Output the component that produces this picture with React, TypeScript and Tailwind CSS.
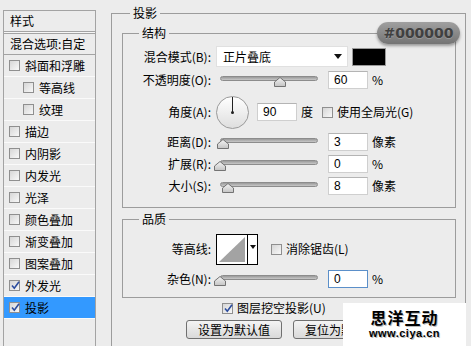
import React from 'react';

const leftItems = [
  { label: '斜面和浮雕', indent: false, checked: false },
  { label: '等高线', indent: true, checked: false },
  { label: '纹理', indent: true, checked: false },
  { label: '描边', indent: false, checked: false },
  { label: '内阴影', indent: false, checked: false },
  { label: '内发光', indent: false, checked: false },
  { label: '光泽', indent: false, checked: false },
  { label: '颜色叠加', indent: false, checked: false },
  { label: '渐变叠加', indent: false, checked: false },
  { label: '图案叠加', indent: false, checked: false },
  { label: '外发光', indent: false, checked: true },
  { label: '投影', indent: false, checked: true, active: true },
];

function Check({ checked }: { checked?: boolean }) {
  return (
    <span className="relative w-[11px] h-[11px] shrink-0 border border-[#8f8f8f] bg-gradient-to-br from-[#d6d6d6] to-[#f8f8f8]">
      {checked && (
        <svg className="absolute left-[0px] top-[-1px]" width="11" height="11" viewBox="0 0 11 11">
          <path d="M2 5.5 L4.3 8.2 L9 1.8" fill="none" stroke="#2b4c9e" strokeWidth="1.6" />
        </svg>
      )}
    </span>
  );
}

function Slider({ pos }: { pos: number }) {
  return (
    <div className="relative w-[98px] h-[14px] ml-[9px] shrink-0">
      <div className="mt-[3px] h-[5px] rounded-full border border-[#8c8c8c] bg-gradient-to-b from-[#9a9a9a] to-[#c8c8c8]" />
      <svg className="absolute top-[4px]" style={{ left: pos - 6 }} width="12" height="10" viewBox="0 0 12 10">
        <defs>
          <linearGradient id="th" x1="0" y1="0" x2="0" y2="1">
            <stop offset="0" stopColor="#f4f4f4" />
            <stop offset="1" stopColor="#c4c4c4" />
          </linearGradient>
        </defs>
        <path d="M6 0.5 L11.5 5 L11.5 9.5 L0.5 9.5 L0.5 5 Z" fill="url(#th)" stroke="#737373" />
      </svg>
    </div>
  );
}

function NumBox({ value, focus }: { value: string; focus?: boolean }) {
  return (
    <div
      className={`w-[40px] h-[18px] shrink-0 bg-white border pl-[5px] flex items-center font-['Liberation_Sans',sans-serif] text-[12px] ${
        focus ? 'border-[#5b8fc9]' : 'border-[#cfcfcf] border-t-[#b4b4b4]'
      }`}
    >
      {value}
    </div>
  );
}

function Label({ text }: { text: string }) {
  return <div className="w-[88px] shrink-0 text-right whitespace-nowrap">{text}</div>;
}

function SliderRow({ label, pos, value, unit }: { label: string; pos: number; value: string; unit: string }) {
  return (
    <div className="h-[22px] flex items-center">
      <Label text={label} />
      <Slider pos={pos} />
      <div className="ml-[10px]">
        <NumBox value={value} />
      </div>
      <span className="ml-[4px]">{unit}</span>
    </div>
  );
}

function Legend({ text }: { text: string }) {
  return (
    <span className="absolute top-[-8px] left-[16px] px-[3px] bg-[#ececec] leading-[14px]">{text}</span>
  );
}

export default function App() {
  return (
    <div className="relative w-[471px] h-[346px] overflow-hidden bg-[#ececec] flex items-start text-[12px] leading-none text-black font-['Noto_Sans_CJK_SC','Noto_Sans',sans-serif]">
      {/* Styles list */}
      <div className="ml-[3px] mt-[10px] w-[93px] h-[360px] shrink-0 border border-[#a3a3a3] flex flex-col">
        <div className="h-[21px] border-b border-[#a3a3a3] pl-[6px] flex items-center">样式</div>
        <div className="h-[1px] bg-[#f6f6f6]" />
        <div className="h-[22px] border-t border-b border-[#a3a3a3] pl-[6px] flex items-center whitespace-nowrap">
          混合选项:自定
        </div>
        {leftItems.map((item) => (
          <div
            key={item.label}
            className={`h-[22px] border-b border-[#fafafa] flex items-center gap-[5px] ${
              item.indent ? 'pl-[19px]' : 'pl-[5px]'
            } ${item.active ? 'bg-[#3399ff]' : ''}`}
          >
            <Check checked={item.checked} />
            <span>{item.label}</span>
          </div>
        ))}
      </div>

      {/* Drop shadow panel */}
      <div className="relative ml-[15px] mt-[13px] w-[355px] h-[360px] shrink-0 border border-[#9c9c9c] flex flex-col">
        <span className="absolute top-[-8px] left-[18px] px-[3px] bg-[#ececec] leading-[14px]">投影</span>

        {/* Structure */}
        <div className="relative ml-[10px] mt-[19px] w-[334px] h-[175px] border border-[#9c9c9c] pt-[12px]">
          <Legend text="结构" />
          <div className="h-[21px] flex items-center">
            <Label text="混合模式(B):" />
            <div className="ml-[5px] w-[132px] h-[21px] bg-white border border-[#e0e0e0] pl-[6px] pr-[5px] flex items-center justify-between">
              <span>正片叠底</span>
              <svg width="8" height="5" viewBox="0 0 8 5">
                <path d="M0 0 L8 0 L4 5 Z" fill="#111" />
              </svg>
            </div>
            <div className="ml-[4px] w-[34px] h-[18px] bg-black border border-[#9a9a9a]" />
          </div>
          <div className="mt-[2px]">
            <SliderRow label="不透明度(O):" pos={60} value="60" unit="%" />
          </div>
          <div className="mt-[2px] h-[38px] flex items-center">
            <Label text="角度(A):" />
            <div className="ml-[5px] relative w-[33px] h-[33px] rounded-full border border-[#9a9a9a] bg-gradient-to-b from-[#ffffff] to-[#dedede] shrink-0">
              <div className="absolute left-[15px] top-[0px] w-[1px] h-[16px] bg-[#222]" />
              <div className="absolute left-[14px] top-[14px] w-[3px] h-[3px] rounded-full bg-[#222]" />
            </div>
            <div className="ml-[8px]">
              <NumBox value="90" />
            </div>
            <span className="ml-[4px]">度</span>
            <div className="ml-[9px] flex items-center gap-[4px]">
              <Check />
              <span>使用全局光(G)</span>
            </div>
          </div>
          <SliderRow label="距离(D):" pos={3} value="3" unit="像素" />
          <SliderRow label="扩展(R):" pos={0} value="0" unit="%" />
          <SliderRow label="大小(S):" pos={8} value="8" unit="像素" />
        </div>

        {/* Quality */}
        <div className="relative ml-[10px] mt-[11px] w-[334px] h-[79px] border border-[#9c9c9c] pt-[14px]">
          <Legend text="品质" />
          <div className="h-[30px] flex items-center">
            <Label text="等高线:" />
            <div className="ml-[5px] w-[42px] h-[31px] border border-black bg-white flex shrink-0">
              <svg width="30" height="29" viewBox="0 0 30 29" className="shrink-0">
                <path d="M2 27 L28 2 L28 27 Z" fill="#a3a3a3" />
              </svg>
              <div className="flex-1 border-l border-black flex justify-center pt-[10px]">
                <svg width="6" height="4" viewBox="0 0 6 4">
                  <path d="M0 0 L6 0 L3 4 Z" fill="#111" />
                </svg>
              </div>
            </div>
            <div className="ml-[13px] flex items-center gap-[4px]">
              <Check />
              <span>消除锯齿(L)</span>
            </div>
          </div>
          <div className="mt-[4px] h-[22px] flex items-center">
            <Label text="杂色(N):" />
            <Slider pos={0} />
            <div className="ml-[10px]">
              <NumBox value="0" focus />
            </div>
            <span className="ml-[4px]">%</span>
          </div>
        </div>

        <div className="mt-[2px] h-[16px] pl-[110px] flex items-center gap-[4px]">
          <Check checked />
          <span>图层挖空投影(U)</span>
        </div>
        <div className="mt-[4px] pl-[74px] flex gap-[11px]">
          <button className="w-[96px] h-[19px] rounded-[3px] border border-[#707070] bg-gradient-to-b from-[#f4f4f4] to-[#d9d9d9] text-[12px] leading-none">
            设置为默认值
          </button>
          <button className="w-[96px] h-[19px] rounded-[3px] border border-[#707070] bg-gradient-to-b from-[#f4f4f4] to-[#d9d9d9] text-[12px] leading-none">
            复位为默认值
          </button>
        </div>
      </div>

      {/* Colour badge */}
      <div className="absolute left-[377px] top-[22px] w-[83px] h-[22px] rounded-full bg-gradient-to-b from-[#a0a0a0] to-[#747474] shadow-[0_2px_3px_rgba(0,0,0,0.35)] flex items-center justify-center font-['DejaVu_Sans',sans-serif] text-[14px] font-bold text-[#404040] [text-shadow:0_1px_0_rgba(255,255,255,0.2)]">
        #000000
      </div>

      {/* Watermark */}
      <div className="absolute left-[343px] top-[303px] w-[123px] h-[43px] bg-white flex flex-col items-center pt-[5px]">
        <span className="text-[16px] font-bold tracking-[1px] leading-[18px] [text-shadow:1px_1px_0_#bbb]">思洋互动</span>
        <span className="mt-[2px] text-[11px] font-bold tracking-[0.5px] leading-[11px] font-['Liberation_Sans',sans-serif] [text-shadow:1px_1px_0_#bbb]">
          www.ciya.cn
        </span>
      </div>
    </div>
  );
}
